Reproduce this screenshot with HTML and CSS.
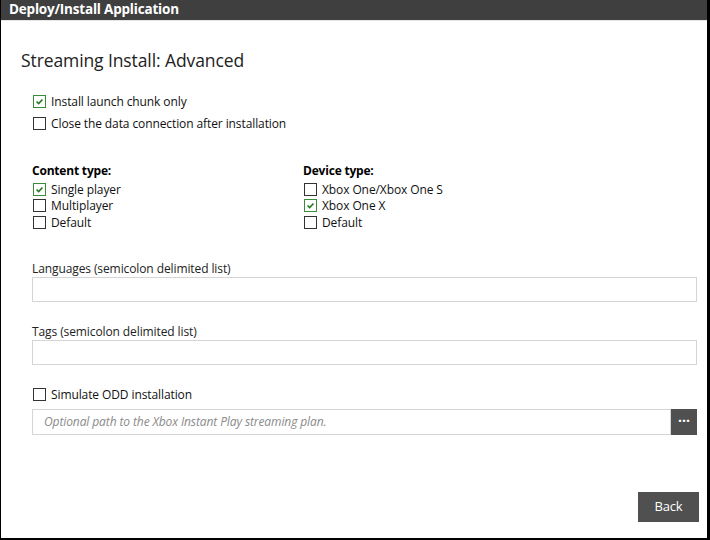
FILE: index.html
```html
<!DOCTYPE html>
<html>
<head>
<meta charset="utf-8">
<link rel="stylesheet" href="styles.css">
</head>
<body>
<div class="window">
  <div class="titlebar">Deploy/Install Application</div>
  <div class="content">
    <h1 class="heading">Streaming Install: Advanced</h1>
    <div class="opts">
      <label class="cb"><span class="box on"><svg viewBox="0 0 13 13"><path d="M3 6.5 L5.5 9 L10 4" /></svg></span>Install launch chunk only</label>
      <label class="cb"><span class="box"></span>Close the data connection after installation</label>
    </div>
    <div class="types">
      <div class="group">
        <div class="gtitle">Content type:</div>
        <label class="cb tight"><span class="box on"><svg viewBox="0 0 13 13"><path d="M3 6.5 L5.5 9 L10 4" /></svg></span>Single player</label>
        <label class="cb tight"><span class="box"></span>Multiplayer</label>
        <label class="cb tight"><span class="box"></span>Default</label>
      </div>
      <div class="group">
        <div class="gtitle">Device type:</div>
        <label class="cb tight"><span class="box"></span>Xbox One/Xbox One S</label>
        <label class="cb tight"><span class="box on"><svg viewBox="0 0 13 13"><path d="M3 6.5 L5.5 9 L10 4" /></svg></span>Xbox One X</label>
        <label class="cb tight"><span class="box"></span>Default</label>
      </div>
    </div>
    <div class="field">
      <div class="flabel">Languages (semicolon delimited list)</div>
      <div class="input"></div>
    </div>
    <div class="field">
      <div class="flabel">Tags (semicolon delimited list)</div>
      <div class="input"></div>
    </div>
    <label class="cb odd"><span class="box"></span>Simulate ODD installation</label>
    <div class="pathrow">
      <div class="input path">Optional path to the Xbox Instant Play streaming plan.</div>
      <div class="browse">···</div>
    </div>
    <div class="footer">
      <div class="btn">Back</div>
    </div>
  </div>
</div>
</body>
</html>
```
FILE: styles.css
```css
html, body {
  margin: 0;
  padding: 0;
  background: #000;
}
body {
  width: 710px;
  height: 540px;
  font-family: "Open Sans", "Noto Sans", sans-serif;
  color: #000;
}
.window {
  box-sizing: border-box;
  margin-left: 1px;
  width: 706px;
  height: 538px;
  background: #fff;
  display: flex;
  flex-direction: column;
}
.titlebar {
  height: 20px;
  background: #3f3f3f;
  color: #fff;
  font-weight: bold;
  font-size: 13.5px;
  line-height: 19px;
  padding-left: 8px;
  border-bottom: 1px solid #e6e6e6;
  letter-spacing: -0.2px;
}
.content {
  flex: 1;
  padding: 0 10px 0 30px;
  display: flex;
  flex-direction: column;
}
.heading {
  margin: 27px 0 0 -10px;
  font-size: 17.5px;
  font-weight: normal;
  line-height: 24px;
  color: #222;
  letter-spacing: -0.1px;
}
.opts {
  margin-top: 21px;
  display: flex;
  flex-direction: column;
  gap: 5px;
}
.cb {
  display: flex;
  align-items: center;
  font-size: 12px;
  line-height: 17px;
  height: 17px;
  color: #111;
  letter-spacing: -0.1px;
}
.cb.tight {
  height: 16.5px;
}
.box {
  box-sizing: border-box;
  width: 13px;
  height: 13px;
  border: 1px solid #333;
  background: #fff;
  margin: 0 5px 0 2px;
  flex: none;
  display: flex;
}
.box.on {
  border-color: #3a8a3a;
}
.box svg {
  width: 11px;
  height: 11px;
}
.box svg path {
  fill: none;
  stroke: #1f7a1f;
  stroke-width: 1.8;
}
.types {
  margin-top: 31px;
  display: flex;
}
.group {
  width: 271px;
  display: flex;
  flex-direction: column;
}
.gtitle {
  font-weight: bold;
  font-size: 12px;
  line-height: 16px;
  margin-left: 1px;
  margin-bottom: 2px;
  letter-spacing: -0.2px;
}
.field {
  margin-top: 30px;
  display: flex;
  flex-direction: column;
}
.field + .field {
  margin-top: 22px;
}
.flabel {
  font-size: 12px;
  line-height: 15px;
  height: 16px;
  margin-left: 1px;
  color: #222;
  letter-spacing: -0.1px;
}
.input {
  box-sizing: border-box;
  height: 25px;
  border: 1px solid #d5d5d5;
  background: #fff;
  margin-left: 1px;
}
.odd {
  margin-top: 21px;
}
.pathrow {
  margin-top: 6px;
  margin-left: 1px;
  display: flex;
  height: 26px;
}
.input.path {
  flex: 1;
  height: 26px;
  margin-left: 0;
  font-style: italic;
  font-size: 12px;
  line-height: 24px;
  color: #8a8a8a;
  padding-left: 11px;
  letter-spacing: -0.1px;
}
.browse {
  width: 26px;
  height: 26px;
  background: #505050;
  color: #fff;
  font-weight: bold;
  font-size: 14px;
  line-height: 24px;
  text-align: center;
}
.footer {
  margin-top: auto;
  margin-bottom: 16px;
  display: flex;
  justify-content: flex-end;
  margin-right: -2px;
}
.btn {
  width: 61px;
  height: 30px;
  background: #505050;
  color: #fff;
  font-size: 13px;
  line-height: 29px;
  text-align: center;
  letter-spacing: -0.2px;
}
```
